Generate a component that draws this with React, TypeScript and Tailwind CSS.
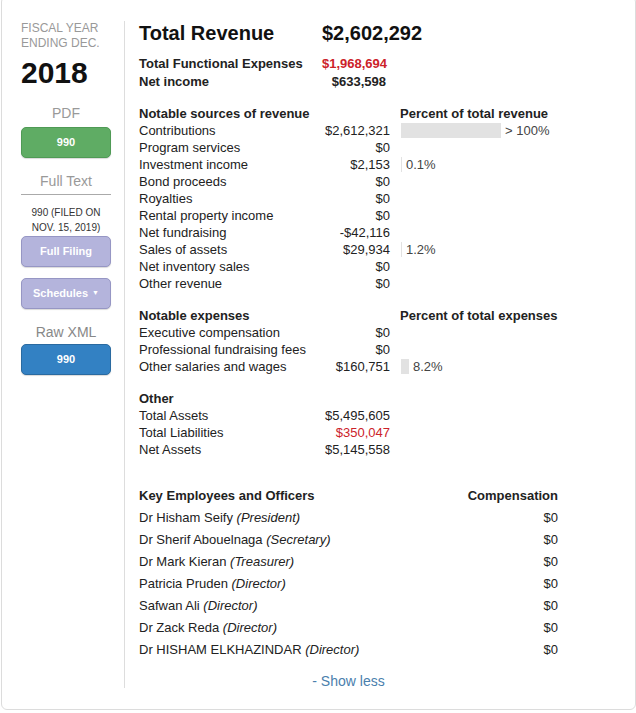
import React from "react";

const font = { fontFamily: '"Liberation Sans", Arial, sans-serif' };

type Row = { label: string; value: string; pct?: number; pctText?: string; red?: boolean };

const revenue: Row[] = [
  { label: "Contributions", value: "$2,612,321", pct: 100, pctText: "> 100%" },
  { label: "Program services", value: "$0" },
  { label: "Investment income", value: "$2,153", pct: 1, pctText: "0.1%" },
  { label: "Bond proceeds", value: "$0" },
  { label: "Royalties", value: "$0" },
  { label: "Rental property income", value: "$0" },
  { label: "Net fundraising", value: "-$42,116" },
  { label: "Sales of assets", value: "$29,934", pct: 1, pctText: "1.2%" },
  { label: "Net inventory sales", value: "$0" },
  { label: "Other revenue", value: "$0" },
];

const expenses: Row[] = [
  { label: "Executive compensation", value: "$0" },
  { label: "Professional fundraising fees", value: "$0" },
  { label: "Other salaries and wages", value: "$160,751", pct: 8, pctText: "8.2%" },
];

const other: Row[] = [
  { label: "Total Assets", value: "$5,495,605" },
  { label: "Total Liabilities", value: "$350,047", red: true },
  { label: "Net Assets", value: "$5,145,558" },
];

const officers = [
  ["Dr Hisham Seify", "President"],
  ["Dr Sherif Abouelnaga", "Secretary"],
  ["Dr Mark Kieran", "Treasurer"],
  ["Patricia Pruden", "Director"],
  ["Safwan Ali", "Director"],
  ["Dr Zack Reda", "Director"],
  ["Dr HISHAM ELKHAZINDAR", "Director"],
];

function Section({ title, pctTitle, rows }: { title: string; pctTitle?: string; rows: Row[] }) {
  return (
    <div className="grid grid-cols-[181px_70px_1fr] text-[13px] leading-[17px]">
      <div className="font-bold">{title}</div>
      <div />
      <div className="pl-[10px] font-bold">{pctTitle}</div>
      {rows.map((r) => (
        <React.Fragment key={r.label}>
          <div>{r.label}</div>
          <div className={`text-right ${r.red ? "text-[#cc2229]" : ""}`}>{r.value}</div>
          <div className="pl-[11px] flex items-center">
            {r.pct != null && (
              <>
                <span className="h-[15px] bg-[#e2e2e2]" style={{ width: r.pct }} />
                <span className="ml-[4px] text-[#444]">{r.pctText}</span>
              </>
            )}
          </div>
        </React.Fragment>
      ))}
    </div>
  );
}

function Btn({ children, cls }: { children: React.ReactNode; cls: string }) {
  return (
    <div
      className={`w-[90px] h-[31px] flex items-center justify-center rounded-[5px] border text-white font-bold text-[11px] shadow-[0_1px_1px_rgba(0,0,0,0.15)] ${cls}`}
    >
      {children}
    </div>
  );
}

export default function App() {
  return (
    <div className="bg-white text-[#222]" style={font}>
      <div className="ml-[1px] -mt-[4px] w-[635px] h-[714px] border border-[#dcdcdc] rounded-[6px] flex pt-[24px] pb-[21px]">
        <div className="w-[123px] pl-[19px] pr-[13px] border-r border-[#ddd] flex flex-col">
          <div className="text-[12px] leading-[15px] text-[#999] uppercase">Fiscal Year Ending Dec.</div>
          <div className="text-[30px] font-bold leading-[34px] mt-[5px] text-[#111]">2018</div>
          <div className="text-center text-[14px] text-[#999] mt-[14px] leading-[18px]">PDF</div>
          <div className="mt-[5px]">
            <Btn cls="bg-[#5fac64] border-[#4f9a55]">990</Btn>
          </div>
          <div className="text-center text-[14px] text-[#999] mt-[14px] leading-[18px] pb-[4px] border-b border-[#aaa]">
            Full Text
          </div>
          <div className="text-center text-[10px] leading-[15px] text-[#333] mt-[10px] uppercase">
            990 (Filed on Nov. 15, 2019)
          </div>
          <div className="mt-[1px]">
            <Btn cls="bg-[#b4b4dc] border-[#9696c4]">Full Filing</Btn>
          </div>
          <div className="mt-[11px]">
            <Btn cls="bg-[#b4b4dc] border-[#9696c4]">
              Schedules <span className="ml-[4px] text-[7px]">▼</span>
            </Btn>
          </div>
          <div className="text-center text-[14px] text-[#888] mt-[14px] leading-[18px]">Raw XML</div>
          <div className="mt-[3px]">
            <Btn cls="bg-[#3381c3] border-[#2a6aa0]">990</Btn>
          </div>
        </div>

        <div className="pl-[14px] flex flex-col">
          <div className="flex font-bold text-[20px] leading-[24px] text-[#111]">
            <div className="w-[183px]">Total Revenue</div>
            <div>$2,602,292</div>
          </div>
          <div className="grid grid-cols-[183px_64px] font-bold text-[13px] leading-[18px] mt-[10px]">
            <div>Total Functional Expenses</div>
            <div className="text-right text-[#cc2229]">$1,968,694</div>
            <div>Net income</div>
            <div className="text-right">$633,598</div>
          </div>
          <div className="mt-[14px]">
            <Section title="Notable sources of revenue" pctTitle="Percent of total revenue" rows={revenue} />
          </div>
          <div className="mt-[15px]">
            <Section title="Notable expenses" pctTitle="Percent of total expenses" rows={expenses} />
          </div>
          <div className="mt-[15px]">
            <Section title="Other" rows={other} />
          </div>
          <div className="w-[419px] mt-[27px] text-[13px]">
            <div className="flex justify-between font-bold leading-[22px]">
              <span>Key Employees and Officers</span>
              <span>Compensation</span>
            </div>
            {officers.map(([name, role]) => (
              <div key={name} className="flex justify-between leading-[22px]">
                <span>
                  {name} <i>({role})</i>
                </span>
                <span>$0</span>
              </div>
            ))}
            <div className="text-center text-[14px] text-[#4a80ad] mt-[10px]">- Show less</div>
          </div>
        </div>
      </div>
    </div>
  );
}
